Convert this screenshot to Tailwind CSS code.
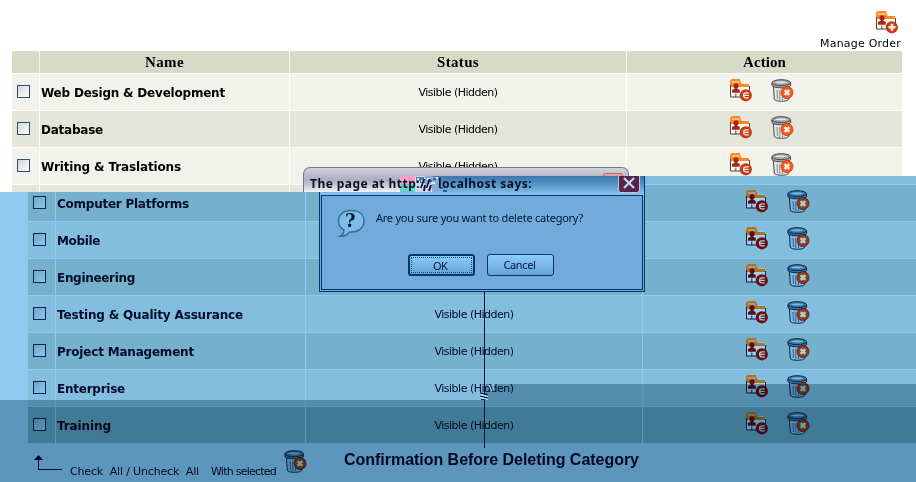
<!DOCTYPE html>
<html lang="en"><head><meta charset="utf-8"><title>Categories</title>
<script src="https://cdn.jsdelivr.net/npm/@tailwindcss/browser@4"></script></head>
<body class="relative w-[916px] h-[482px] overflow-hidden bg-white text-black font-['DejaVu_Sans',sans-serif]">
<svg class="absolute w-0 h-0"><defs>
<symbol id="folder" viewBox="0 0 23 23">
<path d="M.5 17.500V1.500L1.500.5h8.300l1.700 4h7l1 1v12z" fill="var(--paper)"/>
<path d="M1 8V1h9l1.800 4H19v3h-8z" fill="var(--tab)"/>
<path d="M2 2h7l1 2H2z" fill="var(--hi)"/>
<path d="M.5 18V1.500L1.500.5H10" fill="none" stroke="var(--tab)"/>
<path d="M.5 6v12H10M19.500 7v5M5.800 14.500V18" fill="none" stroke="var(--edge)"/>
<circle cx="6" cy="6.800" r="2.600" fill="var(--man)"/><path d="M4.700 8h2.600v1.700l2.500 1.200v2.800H2v-2.800l2.700-1.200z" fill="var(--man)"/>
<circle cx="15.800" cy="16.300" r="6.100" fill="var(--badge)"/></symbol>
<symbol id="edit" viewBox="0 0 23 23"><use href="#folder"/><path d="M18.800 13.800h-2.800q-2.500 0-2.500 2.500t2.500 2.500h2.800M13.500 16.300h5.300" fill="none" stroke="var(--mark)" stroke-width="1.200"/></symbol>
<symbol id="order" viewBox="0 0 23 23"><use href="#folder"/><path d="M16 12.800v7M12.500 16.300h7" stroke="var(--mark)" stroke-width="2.600"/></symbol>
<symbol id="trash" viewBox="0 0 23 23">
<path d="M2.300 6l1 14.500q1 1.800 7.200 1.800t7.200-1.800l1-14.500z" fill="var(--can)" stroke="var(--edge)"/>
<path d="M6 11l.5 9M8.800 11v10M11.500 11v10M14.300 11v9" stroke="var(--rib)" stroke-width="1"/>
<path d="M.9 4v2.500q2 2.300 9.500 2.300t9.200-2.300V4z" fill="var(--lid)" stroke="var(--edge)"/>
<ellipse cx="10.200" cy="3.700" rx="9.200" ry="3" fill="var(--lid)" stroke="var(--edge)"/>
<ellipse cx="10.200" cy="3.400" rx="6.500" ry="1.500" fill="var(--can)" stroke="var(--rib)" stroke-width=".7"/>
<circle cx="16" cy="13.500" r="6" fill="var(--x)" stroke="var(--badge)" stroke-width=".8"/>
<path d="M13.700 11.200l4.600 4.600m0-4.600l-4.600 4.600" stroke="var(--mark)" stroke-width="2.500"/></symbol>
</defs></svg>

<section id="top" class="h-[192px] overflow-hidden pl-3 [--paper:#fffaf2] [--edge:#4a4644] [--tab:#fb8a26] [--hi:#ffc36c] [--man:#ab2610] [--badge:#c83a17] [--mark:#fff1df] [--can:#e5e6e5] [--rib:#858889] [--lid:#a7abad] [--x:#f45c1b]">
<div class="w-[890px] h-[51px] pt-[11px] flex flex-col items-end">
<svg class="w-[23px] h-[23px] mr-[3px]"><use href="#order"/></svg>
<span data-w="81" class="text-[11px] leading-[14px] mt-[3px] mr-px">Manage Order</span></div>
<div class="w-[890px] h-[23px] border-b border-[#fdfdfa] bg-[#d8dac8] grid grid-cols-[28px_250px_337px_275px] text-center font-bold font-['Liberation_Serif',serif] text-[15px] leading-[22px]">
<span class="border-r border-[#f5f5ee]"></span><span class="border-r border-[#f5f5ee]"><span data-w="39">Name</span></span><span class="border-r border-[#f5f5ee]"><span data-w="42">Status</span></span><span><span data-w="43">Action</span></span></div>
</section>

<section id="bottom" class="-mt-4 h-[306px] overflow-hidden bg-[#90caf0] pl-7 text-[#000a29] [clip-path:polygon(430px_0,100%_0,100%_100%,0_100%,0_16px,430px_16px)] [--paper:#9fd1ef] [--edge:#08233e] [--tab:#a87426] [--hi:#b19a72] [--man:#5c0b18] [--badge:#690e14] [--mark:#add0dd] [--can:#82b9e0] [--rib:#255e8f] [--lid:#397cad] [--x:#883f1b]">
<div class="h-[9px] w-[888px] grid grid-cols-[28px_250px_337px_273px] border-b border-[#90caf0] bg-[#84bede]"><i></i><i></i><i class="border-r border-[#90caf0]"></i></div>
<div id="rows"></div>
<div class="flex h-[38px] relative">
<svg class="w-[30px] h-[16px] mt-[11px] ml-[5px]" viewBox="0 0 30 16"><path d="M5.500 3v11.500H29" fill="none" stroke="#000a29"/><path d="M5.500 0L10 5H1z" fill="#000a29"/></svg>
<span data-w="129" class="ml-[7px] mt-[20px] text-[11px] leading-[16px] h-4">Check&nbsp; All / Uncheck&nbsp; All</span>
<span data-w="65" class="ml-[12px] mt-[20px] text-[11px] leading-[16px] h-4">With selected</span>
<svg class="w-[23px] h-[23px] ml-[8px] mt-[6px]"><use href="#trash"/></svg>
<span data-w="295" class="ml-[37px] mt-[6px] font-bold font-['Liberation_Sans',sans-serif] text-[16px] leading-[20px] h-5">Confirmation Before Deleting Category</span>
</div></section>

<div class="absolute inset-0 mix-blend-multiply bg-[#a3bdc9] [clip-path:polygon(0_400px,484px_400px,484px_384px,916px_384px,916px_482px,0_482px)]"></div>
<i class="absolute left-[484px] top-[291px] w-px h-[157px] bg-[#00122e]"></i>
<svg class="absolute left-[480px] top-[384px] w-[17px] h-4" viewBox="0 0 17 16" stroke-width="1.300"><path d="M0 9l8 2M0 12l8 2M1 15l6 1" stroke="#001a38"/><path d="M0 10.500l8 2M0 13.500l8 2" stroke="#b5e2f5"/><path d="M9 1l3 6M13 0v7" stroke="#b5e2f5"/><path d="M10 0l3 7" stroke="#164d70"/></svg>

<div class="absolute left-[303px] top-[167px] w-[326px] h-[25px] rounded-t-[7px] border border-b-0 border-[#77778a] bg-gradient-to-b from-[#d4d4df] via-[#acacbd] to-[#f1f1f6] [clip-path:polygon(0_0,100%_0,100%_9px,127px_9px,127px_25px,0_25px)]"><i class="absolute left-[299px] top-[5px] w-[20px] h-5 rounded-[3px] border border-[#b96a68] bg-[#e4a299]"></i></div>
<div class="absolute left-[319px] top-[176px] w-[326px] h-[116px] border border-t-0 border-[#063572] bg-[#72abd9] [clip-path:polygon(81px_0,100%_0,100%_100%,0_100%,0_16px,81px_16px)]">
<div class="h-[19px] bg-gradient-to-b from-[#3d76ad] via-[#5b9ac9] to-[#8ac5ef]"></div>
<div class="ml-px w-[322px] h-[95px] border border-[#063572] flex">
<svg class="ml-[15px] mt-[13px] w-[29px] h-[29px]" viewBox="0 0 29 29"><path d="M14 1.500C6 1.500 1.500 6 1.500 12q0 6 5.500 9 0 4-4 6.300 6 .2 9.500-4.300C21 23.500 27 19 27 12S21.500 1.500 14 1.500z" fill="#80bce5" stroke="#346e9b" stroke-width="1.500"/></svg>
<div class="ml-[10px] mt-[14px] text-[#00133c]"><div data-w="207" class="w-max text-[11px] leading-[15px] font-['Noto_Sans','DejaVu_Sans',sans-serif]">Are you sure you want to delete category?</div>
<div class="flex gap-3 mt-[29px] ml-[32px] text-[11px] leading-[20px] text-center font-['Noto_Sans','DejaVu_Sans',sans-serif]">
<div class="w-[67px] h-[22px] rounded-[3px] border-2 border-[#063572] bg-gradient-to-b from-[#8dccf8] to-[#65a3d8] p-px"><div class="h-4 leading-[15px] border border-dotted border-[#134983] pr-[3px]"><span data-w="14">OK</span></div></div>
<div class="w-[67px] h-[22px] rounded-[3px] border border-[#063572] bg-gradient-to-b from-[#8dccf8] to-[#65a3d8] pr-[2px]"><span data-w="32">Cancel</span></div></div></div>
<span class="absolute left-[25px] top-[34px] font-['DejaVu_Serif',serif] font-bold text-[18px] leading-[22px] text-[#00133c]">?</span>
</div>
<div class="absolute left-[298px] top-0 w-[22px] h-[17px] rounded-b-[3px] border border-t-0 border-[#b6c9e5] bg-[#582448]"><svg class="w-5 h-4" viewBox="0 0 20 16"><path d="M5 2l10 10M15 2L5 12" stroke="#b8daf4" stroke-width="2.200"/></svg></div>
</div>
<svg class="absolute left-[400px] top-[176px] w-[49px] h-4" viewBox="0 0 49 16"><path d="M0 0h15v8H0z" fill="#f6a3c6"/><path d="M0 8h15v8H0z" fill="#4fdccb"/><path d="M8 2h4v3H8zM3 9h4v4H3z" fill="#ff86bd"/><path d="M15 0h17v16H15z" fill="#d3d5ea"/><path d="M16 1h9v6h-9z" fill="#4d78b4"/><path d="M17 2h2v2h-2zm4 2h2v2h-2zm3-3h2v2h-2zm-6 4h2v2h-2z" fill="#cfe6fa"/><path d="M25 0h7l8 4v12h-8V8h-7z" fill="#88acd6"/><path d="M27 2h3v2h-3zm4 4h4v2h-4zm4-5h3v2h-3z" fill="#d3e8fa"/><path d="M28 4h4v2h-4zm5-2h3v2h-3z" fill="#315f9f"/><path d="M24 15l1-6m4 6l2-6" stroke="#121752" stroke-width="2"/><path d="M40 11h3v2h-3zm3 3h4v2h-4z" fill="#26608b"/></svg>
<div data-w="222" class="absolute left-[310px] top-[174px] text-[12px] leading-[19px] font-bold whitespace-pre font-['Noto_Sans','DejaVu_Sans',sans-serif] text-[#071025]">The page at http://&nbsp; localhost says:</div>

<script>
const line = (name, cols, tone, box) => `<div class="${cols} h-[37px] grid border-b items-stretch ${tone}">
<span class="border-r border-inherit pl-[5px] pt-[11px]"><i class="block w-[13px] h-[13px] border ${box}"></i></span>
<span class="border-r border-inherit pl-px pt-[11px] text-[12px] leading-[16px] font-bold"><span data-w="${name[1]}">${name[0]}</span></span>
<span class="border-r border-inherit text-center pt-[11px] text-[11px] leading-[16px]">${name[2] ? '' : '<span data-w="79">Visible (Hidden)</span>'}</span>
<span class="flex gap-[18px] pl-[103px] pt-[5px]"><svg class="w-[23px] h-[23px]"><use href="#edit"/></svg><svg class="w-[23px] h-[23px]"><use href="#trash"/></svg></span></div>`;
const white = 'border-[#fdfdfa] bg-[#f2f2ed]', grey = 'border-[#fdfdfa] bg-[#e3e4da]';
const light = 'border-[#90caf0] bg-[#84bede]', deep = 'border-[#90caf0] bg-[#75b0cc]', last = 'border-[#90caf0] bg-[#66a5bf]';
const upper = 'w-[890px] grid-cols-[28px_250px_337px_275px]', lower = 'w-[888px] grid-cols-[28px_250px_337px_273px]';
const box1 = 'border-[#28507a] bg-gradient-to-br from-[#d5d5d0] to-white', box2 = 'border-[#062455] bg-gradient-to-br from-[#70a7c8] to-[#8dc7ed]';
document.getElementById('top').insertAdjacentHTML('beforeend',
 [['Web Design &amp; Development',184],['Database',62],['Writing &amp; Traslations',140]].map((n,i)=>line(n,upper,i%2?grey:white,box1)).join('')
 + `<div class="w-[890px] h-[7px] grid grid-cols-[28px_250px_337px_275px] bg-[#e3e4da]"><i class="border-r border-[#fdfdfa]"></i><i class="border-r border-[#fdfdfa]"></i></div>`);
document.getElementById('rows').innerHTML =
 [['Computer Platforms',132,true],['Mobile',43,true],['Engineering',78,true],['Testing &amp; Quality Assurance',186],['Project Management',137],['Enterprise',68],['Training',54]].map((n,i)=>line(n,lower,i===6?last:i%2?light:deep,box2)).join('');
// Adjust each label's tracking to its nominal width
const fit = () => document.querySelectorAll('[data-w]').forEach(e=>{
 e.style.whiteSpace='nowrap';
 const r=document.createRange();
 const n=e.textContent.length;
 for(let k=0;k<3;k++){
  r.selectNodeContents(e);
  const s=parseFloat(e.style.letterSpacing)||0;
  e.style.letterSpacing=(s+(+e.dataset.w-r.getBoundingClientRect().width)/n)+'px';
 }
});
fit();
window.addEventListener('load', fit);
document.fonts.ready.then(fit);
requestAnimationFrame(fit);
</script>
</body></html>
